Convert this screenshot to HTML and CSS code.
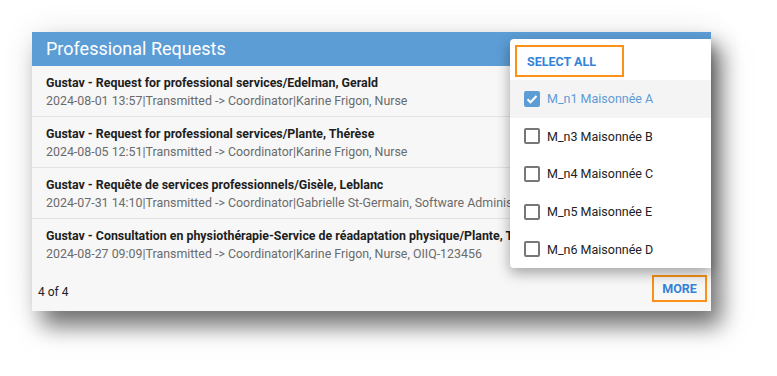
FILE: index.html
```html
<!DOCTYPE html>
<html lang="en">
<head>
  <meta charset="UTF-8" />
  <title>Professional Requests</title>
  <link rel="stylesheet" href="styles.css">
</head>
<body>
  <div class="page">
    <div class="card">
      <div class="card-header">Professional Requests</div>

      <div class="request">
        <div class="title">Gustav - Request for professional services/Edelman, Gerald</div>
        <div class="sub">2024-08-01 13:57|Transmitted -&gt; Coordinator|Karine Frigon, Nurse</div>
      </div>
      <div class="request">
        <div class="title">Gustav - Request for professional services/Plante, Thérèse</div>
        <div class="sub">2024-08-05 12:51|Transmitted -&gt; Coordinator|Karine Frigon, Nurse</div>
      </div>
      <div class="request">
        <div class="title">Gustav - Requête de services professionnels/Gisèle, Leblanc</div>
        <div class="sub">2024-07-31 14:10|Transmitted -&gt; Coordinator|Gabrielle St-Germain, Software Administrator</div>
      </div>
      <div class="request last">
        <div class="title">Gustav - Consultation en physiothérapie-Service de réadaptation physique/Plante, Thérèse</div>
        <div class="sub">2024-08-27 09:09|Transmitted -&gt; Coordinator|Karine Frigon, Nurse, OIIQ-123456</div>
      </div>

      <div class="card-footer">
        <span class="count">4 of 4</span>
        <button class="more">MORE</button>
      </div>

      <div class="menu">
        <div class="menu-top">
          <button class="select-all">SELECT ALL</button>
        </div>
        <label class="option checked">
          <span class="box">
            <svg viewBox="0 0 16 16" width="16" height="16"><path d="M3.5 8.3l3 3 6-6.3" fill="none" stroke="#fff" stroke-width="2"/></svg>
          </span>
          M_n1 Maisonnée A
        </label>
        <label class="option"><span class="box"></span>M_n3 Maisonnée B</label>
        <label class="option"><span class="box"></span>M_n4 Maisonnée C</label>
        <label class="option"><span class="box"></span>M_n5 Maisonnée E</label>
        <label class="option"><span class="box"></span>M_n6 Maisonnée D</label>
      </div>
    </div>
  </div>
</body>
</html>
```

FILE: styles.css
```css
* {
  box-sizing: border-box;
  margin: 0;
  padding: 0;
}

html, body {
  height: 100%;
}

body {
  font-family: Roboto, "Liberation Sans", sans-serif;
  background: #fff;
  color: #222;
  overflow: hidden;
}

.page {
  min-height: 376px;
  padding: 32px 0 0 32px;
}

.card {
  position: relative;
  width: 679px;
  background: #f7f7f7;
  box-shadow: 10px 15px 22px rgba(0, 0, 0, 0.55), 0 0 34px rgba(0, 0, 0, 0.07);
}

.card-header {
  height: 34px;
  padding: 5px 14px 0;
  background: #5c9dd6;
  color: #fff;
  font-size: 18px;
  line-height: 24px;
}

.request {
  height: 51px;
  padding: 8px 14px 0;
  border-bottom: 1px solid #e3e3e3;
  white-space: nowrap;
  overflow: hidden;
}

.request.last {
  border-bottom: none;
}

.title {
  font-size: 12.4px;
  font-weight: bold;
  line-height: 18px;
  color: #1e1e1e;
}

.sub {
  font-size: 12.4px;
  line-height: 18px;
  color: #6b6b6b;
}

.card-footer {
  display: flex;
  align-items: flex-start;
  justify-content: space-between;
  height: 41px;
  padding: 5px 4px 0 6px;
}

.count {
  margin-top: 9px;
  font-size: 12px;
  line-height: 16px;
  color: #222;
}

.more, .select-all {
  font-family: Roboto, "Liberation Sans", sans-serif;
  font-weight: bold;
  font-size: 12.5px;
  color: #3384d8;
  background: #fff;
  border: 2px solid #fb9217;
  cursor: pointer;
}

.more {
  width: 55px;
  height: 27px;
  background: #f7f7f7;
}

.menu {
  position: absolute;
  top: 7px;
  right: 0;
  width: 201px;
  background: #fff;
  border-radius: 4px 0 0 4px;
  box-shadow: 0 5px 14px rgba(0, 0, 0, 0.35);
}

.menu-top {
  padding: 6px 0 3px 5px;
}

.select-all {
  width: 109px;
  height: 32px;
  text-align: left;
  padding-left: 10px;
}

.option {
  display: flex;
  align-items: center;
  gap: 7px;
  height: 37.6px;
  padding-left: 14px;
  font-size: 12.5px;
  color: #222;
  cursor: pointer;
}

.option.checked {
  background: #f4f4f4;
  color: #5d9bd8;
}

.box {
  display: flex;
  width: 16px;
  height: 16px;
  border: 2px solid #777;
  border-radius: 2px;
  background: #fff;
}

.checked .box {
  border: none;
  background: #5c9dd6;
}
```
